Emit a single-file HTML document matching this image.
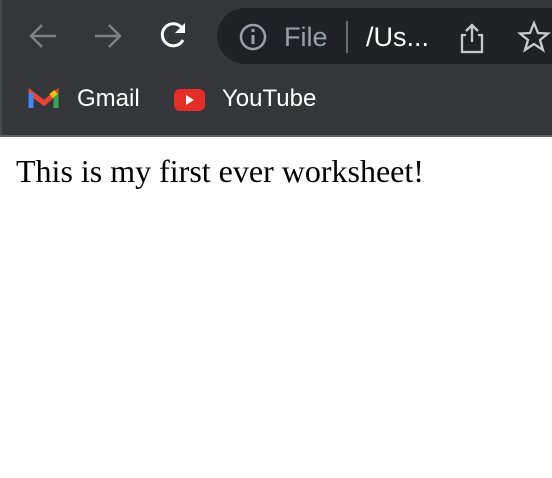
<!DOCTYPE html>
<html><head><style>
body{margin:0;width:552px;height:478px;overflow:hidden;background:#fff;font-family:"Liberation Sans",sans-serif}
.bar{position:absolute;left:0;top:0;width:552px;height:136px;background:#35363a;border-left:2px solid #4a4b4f;box-sizing:border-box}
.line{position:absolute;left:0;top:135px;width:552px;height:2px;background:#5f6064}
.omni{position:absolute;left:217px;top:8px;width:400px;height:56px;border-radius:28px;background:#202124}
.t{position:absolute;font-size:25px;line-height:1}
p{position:absolute;left:16px;top:153px;margin:0;font-family:"Liberation Serif",serif;font-size:32px;color:#000}
</style></head><body>
<div class="bar"></div><div class="line"></div>
<div class="omni"></div>
<svg style="position:absolute;left:0;top:0" width="552" height="136">
 <g fill="none" stroke="#7f8084" stroke-width="2.5">
  <path d="M56 36H31M42 25L31 36L42 47"/>
  <path d="M95 36H120M109 25L120 36L109 47"/>
 </g>
 <path d="M182 28A11 11 0 1 0 183 40" fill="none" stroke="#fff" stroke-width="3"/>
 <path d="M185 23V33H175Z" fill="#fff"/>
 <circle cx="253" cy="37" r="12" fill="none" stroke="#9aa0a6" stroke-width="2.5"/>
 <rect x="251.5" y="35" width="3" height="9" fill="#9aa0a6"/><circle cx="253" cy="30.5" r="1.7" fill="#9aa0a6"/>
 <rect x="346" y="21" width="2" height="32" fill="#6a6b6f"/>
 <g fill="none" stroke="#c8c9cc" stroke-width="2.3">
  <path d="M466 35H462V52H482V35H478M472 42V25M466 31L472 25L478 31"/>
  <path d="M534 23L538 33L548 33.5L540 40L543 50L534 44L525 50L528 40L520 33.5L530 33Z"/>
 </g>
 <path d="M31 108V93L44 103L56 93V108" fill="none" stroke="#ea4335" stroke-width="5"/>
 <path d="M31 108V93" stroke="#4285f4" stroke-width="5"/><path d="M56 108V93" stroke="#34a853" stroke-width="5"/>
 <path d="M51 96L56 92" stroke="#fbbc04" stroke-width="5"/>
 <rect x="174" y="89" width="31" height="22" rx="6" fill="#e52d27"/>
 <path d="M186 95V105L194 100Z" fill="#fff"/>
</svg>
<div class="t" style="left:284px;top:24px;color:#9aa0a6;font-size:27px">File</div>
<div class="t" style="left:366px;top:24px;color:#fff;font-size:27px">/Us...</div>
<div class="t" style="left:77px;top:87px;color:#fff;font-size:24px">Gmail</div>
<div class="t" style="left:222px;top:87px;color:#fff;font-size:24px">YouTube</div>
<p>This is my first ever worksheet!</p>
</body></html>
